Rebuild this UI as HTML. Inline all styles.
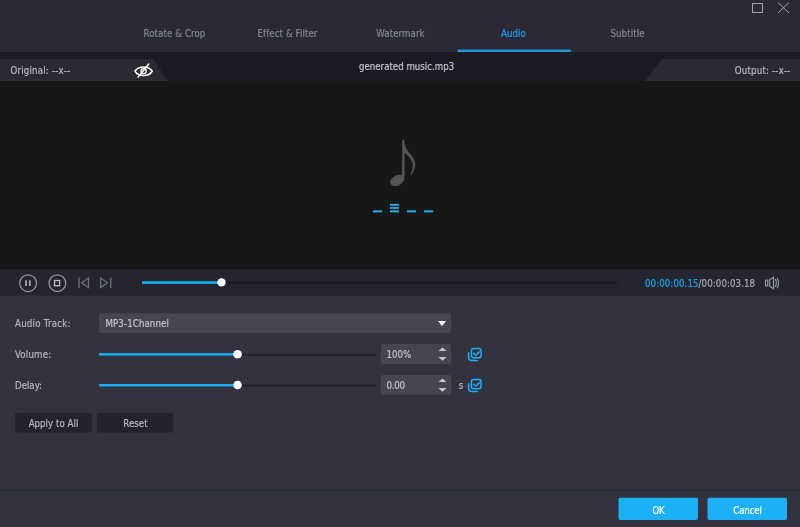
<!DOCTYPE html>
<html><head><meta charset="utf-8"><title>Audio</title>
<style>
*{margin:0;padding:0;box-sizing:border-box}
html,body{width:800px;height:527px;overflow:hidden;background:#32333f}
body{position:relative;font-family:"DejaVu Sans Condensed","Liberation Sans",sans-serif;font-size:9.6px;letter-spacing:.1px;-webkit-text-stroke:.2px;color:#c9c9cd}
.abs{position:absolute}
.t{position:absolute;line-height:14px;height:14px;white-space:nowrap}
.tab{position:absolute;top:26.8px;height:14px;line-height:14px;width:113px;text-align:center;color:#85868f;font-size:9.6px;white-space:nowrap}
.tab.on{color:#1e9fe8}
.lbl{position:absolute;left:15px;height:14px;line-height:14px;white-space:nowrap;color:#b6b6bb;font-size:9.6px;letter-spacing:.2px}
.box{position:absolute;height:20px}
.box span{position:absolute;left:6.5px;top:4.2px;line-height:14px;white-space:nowrap;color:#c2c2c7}
.btn{position:absolute;height:20px;line-height:22px;text-align:center;color:#b9b9be;white-space:nowrap;font-size:9.6px;letter-spacing:.04px}
.pbtn{position:absolute;top:498px;height:22px;line-height:26.2px;width:79px;text-align:center;color:#fff;white-space:nowrap;font-size:9.6px;letter-spacing:-.15px}
svg{position:absolute;overflow:visible}
</style></head><body>
<svg id="bg" style="left:0;top:0" width="800" height="527" viewBox="0 0 800 527">
  <!-- backgrounds -->
  <rect x="0" y="0" width="800" height="52" fill="#292a35"/>
  <rect x="0" y="52" width="800" height="29" fill="#1a1b24"/>
  <rect x="0" y="81" width="800" height="188.7" fill="#171717"/>
  <rect x="0" y="269.7" width="800" height="25.95" fill="#24252e"/>
  <rect x="0" y="489.5" width="800" height="1.1" fill="#24252d"/>
  <rect x="618.5" y="497.8" width="79.5" height="22.2" rx="2" fill="#1cb0f6"/>
  <rect x="707.5" y="497.8" width="79.5" height="22.2" rx="2" fill="#1cb0f6"/>
  <!-- active tab underline -->
  <rect x="457.5" y="49.6" width="113.3" height="2.4" fill="#1a98e0"/>
  <!-- window buttons -->
  <rect x="752.5" y="3.5" width="10" height="9" fill="none" stroke="#a4a4aa" stroke-width="1"/>
  <path d="M778 2.5 L789 13 M789 2.5 L778 13" stroke="#a8a8ae" stroke-width="1" fill="none"/>
  <!-- info tabs -->
  <path d="M0 61 Q0 59 2 59 L153 59 L168 81 L0 81 Z" fill="#292a35"/>
  <path d="M800 59 L662 59 L645 81 L800 81 Z" fill="#292a35"/>
  <!-- eye-off icon -->
  <g fill="none" stroke="#fff" stroke-linecap="round" stroke-linejoin="round">
    <path d="M135 71.2 C138.6 65.5 148.6 65.5 152.2 71.2 C148.6 76.9 138.6 76.9 135 71.2 Z" stroke-width="1.6"/>
    <circle cx="143.6" cy="71.1" r="2.6" stroke-width="1.3"/>
    <path d="M138.1 76.9 L148.8 64" stroke-width="1.5"/>
  </g>
  <!-- music note -->
  <g fill="#555">
    <ellipse cx="397.2" cy="180.4" rx="7.5" ry="5.1" transform="rotate(-28 397.2 180.4)"/>
    <path d="M402.2 139.8 L404.2 139.8 C404.4 144 405.4 147.6 407.4 150.6 C410 154.4 415.4 158.6 415.2 165 C415 169 413 172.6 410.8 175.5 L410.1 175.1 C412 171.6 413.1 168 412.8 164.6 C412.4 159.8 408.6 155.6 404.5 152.9 L404.5 179 L402 179 Z"/>
  </g>
  <!-- level bars -->
  <g fill="#1ab7f9">
    <rect x="373" y="210.4" width="9.1" height="1.9"/>
    <rect x="390" y="210.4" width="9.1" height="1.9"/>
    <rect x="390" y="207.1" width="9.1" height="1.7"/>
    <rect x="390" y="203.9" width="9.1" height="1.8"/>
    <rect x="407" y="210.4" width="9.1" height="1.9"/>
    <rect x="424" y="210.4" width="9.1" height="1.9"/>
  </g>
  <!-- transport controls -->
  <g fill="none" stroke="#94959c" stroke-width="1.25">
    <circle cx="28.1" cy="283.15" r="8.4"/>
    <circle cx="57.4" cy="283.15" r="8.35"/>
    <path d="M26.1 280.3 V286.1 M29.8 280.3 V286.1" stroke="#a9a9af" stroke-width="1.7"/>
    <rect x="54.5" y="280.5" width="5.1" height="5.2" stroke="#c0c0c5" stroke-width="1.3"/>
  </g>
  <g fill="none" stroke="#72737b" stroke-width="1.2">
    <path d="M79 277.7 V288"/>
    <path d="M88.5 278.1 L81.6 282.85 L88.5 287.6 Z"/>
    <path d="M100.7 278.1 L107.6 282.85 L100.7 287.6 Z"/>
    <path d="M110.8 277.7 V288"/>
  </g>
  <rect x="142" y="281.6" width="475.3" height="2" fill="#1a1a21"/>
  <rect x="142" y="281.2" width="78" height="2.7" fill="#17aef4"/>
  <circle cx="221.5" cy="282.4" r="4.2" fill="#fff"/>
  <!-- speaker -->
  <g fill="none" stroke="#9a9ba2" stroke-width="1.1">
    <rect x="765.5" y="280.2" width="2.2" height="5.6"/>
    <path d="M769.6 279.8 L773.5 277.3 V288.7 L769.6 286.3 Z"/>
    <path d="M775.3 279 Q777.3 283 775.3 287"/>
    <path d="M777 277.8 Q780.2 283 777 288.2"/>
  </g>
  <!-- field + button backgrounds -->
  <rect x="99" y="313.2" width="352" height="19.8" rx="2" fill="#454651"/>
  <rect x="381" y="344.1" width="70" height="19.8" rx="2" fill="#454651"/>
  <rect x="381" y="375" width="70" height="19.6" rx="2" fill="#454651"/>
  <rect x="15" y="413.1" width="76.8" height="19.5" rx="2" fill="#22232c"/>
  <rect x="96.8" y="413.1" width="76.5" height="19.5" rx="2" fill="#22232c"/>
  <!-- sliders -->
  <rect x="99" y="353.8" width="277" height="2" fill="#23232b"/>
  <rect x="99" y="353.1" width="137" height="2.5" fill="#17aef4"/>
  <circle cx="237.6" cy="354.2" r="4.3" fill="#fff"/>
  <rect x="99" y="384.7" width="277" height="2" fill="#23232b"/>
  <rect x="99" y="384" width="137" height="2.5" fill="#17aef4"/>
  <circle cx="237.6" cy="385" r="4.3" fill="#fff"/>
</svg>

<div id="txt" style="position:absolute;left:0;top:0;width:800px;height:527px;transform:translateZ(0)">
<div class="tab" style="left:118px">Rotate &amp; Crop</div>
<div class="tab" style="left:231px">Effect &amp; Filter</div>
<div class="tab" style="left:344px">Watermark</div>
<div class="tab on" style="left:457px">Audio</div>
<div class="tab" style="left:571px">Subtitle</div>

<div class="t" style="left:10.5px;top:64.3px;color:#b9b9be;letter-spacing:.2px">Original: --x--</div>
<div class="t" style="left:359px;top:60.3px;color:#c4c4c8;letter-spacing:.01px">generated music.mp3</div>
<div class="t" style="left:734.8px;top:64.3px;color:#b9b9be;letter-spacing:.2px">Output: --x--</div>

<div class="t" style="left:645px;top:276.8px;color:#a9a9af"><span style="color:#1ea3ea">00:00:00.15</span>/00:00:03.18</div>

<div class="lbl" style="top:317.2px;letter-spacing:.25px">Audio Track:</div>
<div class="box" style="left:99px;top:313px;width:352px"><span>MP3-1Channel</span></div>
<svg style="left:438px;top:321px" width="8" height="5" viewBox="0 0 8 5"><path d="M0 0 H8 L4 5 Z" fill="#fff"/></svg>

<div class="lbl" style="top:348.2px">Volume:</div>
<div class="box" style="left:381px;top:344px;width:70px"><span style="left:5.5px;letter-spacing:.05px">100%</span></div>
<svg style="left:438px;top:347px" width="9" height="14" viewBox="0 0 9 14"><path d="M0.5 4 L4.5 0.4 L8.5 4 Z M0.5 10 L4.5 13.8 L8.5 10 Z" fill="#c9c9cd"/></svg>

<div class="lbl" style="top:379.2px;letter-spacing:0">Delay:</div>
<div class="box" style="left:381px;top:375px;width:70px"><span style="left:5.5px;letter-spacing:-.2px">0.00</span></div>
<svg style="left:438px;top:378px" width="9" height="14" viewBox="0 0 9 14"><path d="M0.5 4 L4.5 0.4 L8.5 4 Z M0.5 10 L4.5 13.8 L8.5 10 Z" fill="#c9c9cd"/></svg>
<div class="t" style="left:458.8px;top:378.6px;color:#b9b9be">s</div>

<svg style="left:467px;top:347px" width="16" height="15" viewBox="467 347 16 15"><g fill="none" stroke="#1cb2f5" stroke-width="1.5" stroke-linecap="round" stroke-linejoin="round"><rect x="471.4" y="348.5" width="9.7" height="9.2" rx="2.4"/><path d="M473.7 353.3 L475.7 355.2 L479.2 351.9"/><path d="M468.6 352.7 V357.6 Q468.6 360.4 471.4 360.4 H477.2"/></g></svg>
<svg style="left:467px;top:377.7px" width="16" height="15" viewBox="467 347 16 15"><g fill="none" stroke="#1cb2f5" stroke-width="1.5" stroke-linecap="round" stroke-linejoin="round"><rect x="471.4" y="348.5" width="9.7" height="9.2" rx="2.4"/><path d="M473.7 353.3 L475.7 355.2 L479.2 351.9"/><path d="M468.6 352.7 V357.6 Q468.6 360.4 471.4 360.4 H477.2"/></g></svg>

<div class="btn" style="left:15px;top:413px;width:77px">Apply to All</div>
<div class="btn" style="left:97px;top:413px;width:77px">Reset</div>
<div class="pbtn" style="left:619px">OK</div>
<div class="pbtn" style="left:708px">Cancel</div>
</div>
</body></html>
